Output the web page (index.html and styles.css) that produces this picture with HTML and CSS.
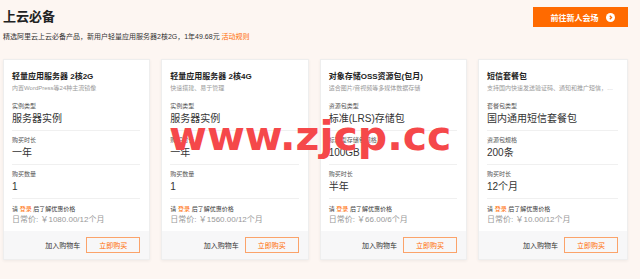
FILE: index.html
```html
<!DOCTYPE html>
<html lang="zh-CN">
<head>
  <meta charset="UTF-8" />
  <meta name="viewport" content="width=device-width, initial-scale=1.0"/>
  <title>上云必备</title>
  <link rel="stylesheet" href="styles.css">
</head>
<body>

  <div class="header">
    <div class="intro">
      <h1>上云必备</h1>
      <p class="lead">精选阿里云上云必备产品，新用户轻量应用服务器2核2G，1年49.68元 <a href="#" class="rules">活动规则</a></p>
    </div>
    <a href="#" class="cta">前往新人会场
      <svg class="cta-icon" viewBox="0 0 10 10" width="9" height="9">
        <circle cx="5" cy="5" r="5" fill="#fff"/>
        <path d="M4.2 3 L6.2 5 L4.2 7" fill="none" stroke="#ff6a00" stroke-width="1.4"/>
      </svg>
    </a>
  </div>

  <div class="cards">

    <div class="card">
      <div class="card-body">
        <h2>轻量应用服务器 2核2G</h2>
        <p class="desc">内置WordPress等24种主流镜像</p>
        <div class="field first">
          <div class="label">实例类型</div>
          <div class="value">服务器实例</div>
        </div>
        <div class="field">
          <div class="label">购买时长</div>
          <div class="value">一年</div>
        </div>
        <div class="field">
          <div class="label">购买数量</div>
          <div class="value">1</div>
        </div>
        <p class="promo">请 <a href="#">登录</a> 后了解优惠价格</p>
        <p class="price">日常价: ￥1080.00/12个月</p>
      </div>
      <div class="card-foot">
        <a href="#" class="cart">加入购物车</a>
        <a href="#" class="buy">立即购买</a>
      </div>
    </div>

    <div class="card">
      <div class="card-body">
        <h2>轻量应用服务器 2核4G</h2>
        <p class="desc">快速搭建、易于管理</p>
        <div class="field first">
          <div class="label">实例类型</div>
          <div class="value">服务器实例</div>
        </div>
        <div class="field">
          <div class="label">购买时长</div>
          <div class="value">一年</div>
        </div>
        <div class="field">
          <div class="label">购买数量</div>
          <div class="value">1</div>
        </div>
        <p class="promo">请 <a href="#">登录</a> 后了解优惠价格</p>
        <p class="price">日常价: ￥1560.00/12个月</p>
      </div>
      <div class="card-foot">
        <a href="#" class="cart">加入购物车</a>
        <a href="#" class="buy">立即购买</a>
      </div>
    </div>

    <div class="card">
      <div class="card-body">
        <h2>对象存储OSS资源包(包月)</h2>
        <p class="desc">适合图片/音视频等多媒体数据存储</p>
        <div class="field first">
          <div class="label">资源包类型</div>
          <div class="value">标准(LRS)存储包</div>
        </div>
        <div class="field">
          <div class="label">标准型存储包规格</div>
          <div class="value">100GB</div>
        </div>
        <div class="field">
          <div class="label">购买时长</div>
          <div class="value">半年</div>
        </div>
        <p class="promo">请 <a href="#">登录</a> 后了解优惠价格</p>
        <p class="price">日常价: ￥66.00/6个月</p>
      </div>
      <div class="card-foot">
        <a href="#" class="cart">加入购物车</a>
        <a href="#" class="buy">立即购买</a>
      </div>
    </div>

    <div class="card">
      <div class="card-body">
        <h2>短信套餐包</h2>
        <p class="desc">支持国内快速发送验证码、通知和推广短信，覆盖全国三网运营商</p>
        <div class="field first">
          <div class="label">套餐包类型</div>
          <div class="value">国内通用短信套餐包</div>
        </div>
        <div class="field">
          <div class="label">资源包规格</div>
          <div class="value">200条</div>
        </div>
        <div class="field">
          <div class="label">购买时长</div>
          <div class="value">12个月</div>
        </div>
        <p class="promo">请 <a href="#">登录</a> 后了解优惠价格</p>
        <p class="price">日常价: ￥10.00/12个月</p>
      </div>
      <div class="card-foot">
        <a href="#" class="cart">加入购物车</a>
        <a href="#" class="buy">立即购买</a>
      </div>
    </div>

  </div>

  <div class="watermark">www.zjcp.cc</div>

</body>
</html>
```

FILE: styles.css
```css
body {
  position: relative;
  margin: 0;
  padding: 0 12px 0 3px;
  height: 279px;
  box-sizing: border-box;
  background-color: #fdf6f2;
  font-family: "Liberation Sans", "Noto Sans CJK SC", sans-serif;
  color: #333;
  overflow: hidden;
}

a {
  text-decoration: none;
}

.header {
  display: flex;
  justify-content: space-between;
  align-items: flex-start;
}

h1 {
  margin: 9px 0 0;
  font-size: 13px;
  line-height: 16px;
  font-weight: bold;
  color: #222;
}

.lead {
  margin: 7px 0 0;
  font-size: 7px;
  line-height: 10px;
  color: #333;
}

.rules {
  color: #ff6a00;
}

.cta {
  display: flex;
  align-items: center;
  justify-content: center;
  gap: 7px;
  margin-top: 7px;
  width: 95px;
  height: 20px;
  padding-left: 4px;
  box-sizing: border-box;
  background-color: #ff6a00;
  color: #fff;
  font-size: 8px;
  font-weight: bold;
}

.cta-icon {
  display: block;
}

.cards {
  display: flex;
  gap: 11px;
  margin-top: 17px;
}

.card {
  width: 148px;
  background-color: #fff;
  border: 1px solid #eeeeee;
  box-shadow: 0 1px 3px rgba(0, 0, 0, 0.06);
}

.card-body {
  padding: 11px 9px 0 8px;
}

h2 {
  margin: 0;
  font-size: 8px;
  line-height: 12px;
  font-weight: bold;
  color: #222;
}

.desc {
  margin: 0;
  font-size: 6px;
  line-height: 10px;
  color: #999;
  white-space: nowrap;
  overflow: hidden;
  text-overflow: ellipsis;
}

.field {
  padding: 4px 0 3px;
  border-bottom: 1px solid #f0f0f0;
}

.field.first {
  margin-top: 4px;
}

.label {
  font-size: 6px;
  line-height: 10px;
  color: #555;
}

.value {
  font-size: 10px;
  line-height: 16px;
  color: #333;
}

.promo {
  margin: 5px 0 0;
  font-size: 6px;
  line-height: 10px;
  color: #333;
}

.promo a {
  color: #ff6a00;
}

.price {
  margin: 0;
  padding-bottom: 5px;
  font-size: 8px;
  line-height: 12px;
  color: #999;
}

.card-foot {
  display: flex;
  justify-content: flex-end;
  align-items: center;
  gap: 6px;
  height: 28px;
  padding-right: 9px;
  background-color: #f7f7f8;
}

.cart {
  font-size: 7px;
  color: #333;
}

.buy {
  display: flex;
  align-items: center;
  justify-content: center;
  width: 54px;
  height: 16px;
  box-sizing: border-box;
  border: 1px solid #fba36a;
  font-size: 7px;
  color: #ff6a00;
}

.watermark {
  position: absolute;
  top: 116px;
  left: 169px;
  font-family: "DejaVu Sans", sans-serif;
  font-size: 41px;
  line-height: 41px;
  font-weight: bold;
  color: #f5484a;
  white-space: nowrap;
}
```
